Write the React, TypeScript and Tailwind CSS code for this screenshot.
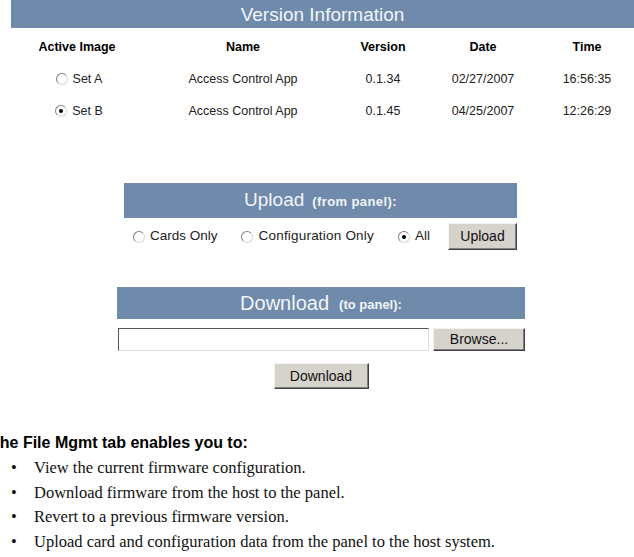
import React from "react";

function Radio({ checked }: { checked?: boolean }) {
  return (
    <span className="inline-flex h-[12px] w-[12px] shrink-0 items-center justify-center rounded-full border border-t-[#808080] border-l-[#808080] border-r-[#d8d8d8] border-b-[#d8d8d8] bg-white">
      {checked && <span className="h-[4px] w-[4px] rounded-full bg-black" />}
    </span>
  );
}

function Btn({ children, className }: { children: React.ReactNode; className: string }) {
  return (
    <button
      className={`flex items-center justify-center border border-t-[#f4f4f4] border-l-[#f4f4f4] border-r-[#404040] border-b-[#404040] bg-[#d6d3cc] shadow-[inset_-1px_-1px_0_#808080] text-[14px] text-[#111] ${className}`}
    >
      {children}
    </button>
  );
}

export default function App() {
  const rows = [
    { set: "Set A", checked: false, name: "Access Control App", version: "0.1.34", date: "02/27/2007", time: "16:56:35" },
    { set: "Set B", checked: true, name: "Access Control App", version: "0.1.45", date: "04/25/2007", time: "12:26:29" },
  ];

  return (
    <div className="relative h-[557px] w-[634px] overflow-hidden bg-white font-['Liberation_Sans',Arial,sans-serif] text-[#222]">
      {/* Version info */}
      <div className="ml-[11px] flex h-[28px] items-center justify-center bg-[#6f8aab] text-[19px] leading-none text-[#f2f5f9]">
        Version Information
      </div>
      <div className="ml-[11px] mt-[3px] flex flex-col text-[12.5px]">
        <div className="flex h-[32px] items-center font-bold text-black">
          <div className="w-[132px] text-center">Active Image</div>
          <div className="w-[200px] text-center">Name</div>
          <div className="w-[80px] text-center">Version</div>
          <div className="w-[120px] text-center">Date</div>
          <div className="w-[88px] text-center">Time</div>
        </div>
        {rows.map((r) => (
          <div key={r.set} className="flex h-[32px] items-center">
            <div className="flex w-[132px] items-center justify-center gap-[5px] pl-[4px]">
              <Radio checked={r.checked} />
              <span>{r.set}</span>
            </div>
            <div className="w-[200px] text-center">{r.name}</div>
            <div className="w-[80px] text-center">{r.version}</div>
            <div className="w-[120px] text-center">{r.date}</div>
            <div className="w-[88px] text-center">{r.time}</div>
          </div>
        ))}
      </div>

      {/* Upload */}
      <div className="ml-[124px] mt-[56px] w-[393px]">
        <div className="flex h-[35px] items-center justify-center gap-[8px] bg-[#6f8aab] text-[#f2f5f9]">
          <span className="text-[19px]">Upload</span>
          <span className="mt-[3px] text-[13px] font-bold tracking-[0.4px]">(from panel):</span>
        </div>
        <div className="mt-[5px] flex h-[27px] items-center text-[13.5px]">
          <div className="ml-[9px] flex items-center gap-[5px]">
            <Radio />
            <span>Cards Only</span>
          </div>
          <div className="ml-[23px] flex items-center gap-[6px]">
            <Radio />
            <span className="tracking-[0.2px]">Configuration Only</span>
          </div>
          <div className="ml-[24px] flex items-center gap-[5px]">
            <Radio checked />
            <span>All</span>
          </div>
          <Btn className="ml-auto h-[27px] w-[69px]">Upload</Btn>
        </div>
      </div>

      {/* Download */}
      <div className="ml-[117px] mt-[37px] w-[408px]">
        <div className="flex h-[32px] items-center justify-center gap-[10px] bg-[#6f8aab] text-[#f2f5f9]">
          <span className="text-[20px]">Download</span>
          <span className="mt-[3px] text-[13px] font-bold">(to panel):</span>
        </div>
        <div className="mt-[9px] flex h-[23px] items-stretch">
          <div className="ml-[1px] w-[311px] border border-t-[#555] border-l-[#555] border-r-[#ddd] border-b-[#ddd] bg-white" />
          <Btn className="ml-[4px] w-[92px]">Browse...</Btn>
        </div>
        <div className="mt-[12px] flex justify-center">
          <Btn className="h-[26px] w-[95px]">Download</Btn>
        </div>
      </div>

      {/* Description */}
      <div className="mt-[45px]">
        <div className="-ml-[10px] text-[16px] font-bold leading-[18px] text-black">The File Mgmt tab enables you to:</div>
        <ul className="mt-[7px] flex flex-col gap-[6.5px] font-['Liberation_Serif','Times_New_Roman',serif] text-[16.5px] leading-[18px] text-[#111]">
          {[
            "View the current firmware configuration.",
            "Download firmware from the host to the panel.",
            "Revert to a previous firmware version.",
            "Upload card and configuration data from the panel to the host system.",
          ].map((t) => (
            <li key={t} className="flex">
              <span className="w-[34px] pl-[11px]">•</span>
              <span>{t}</span>
            </li>
          ))}
        </ul>
      </div>
    </div>
  );
}
